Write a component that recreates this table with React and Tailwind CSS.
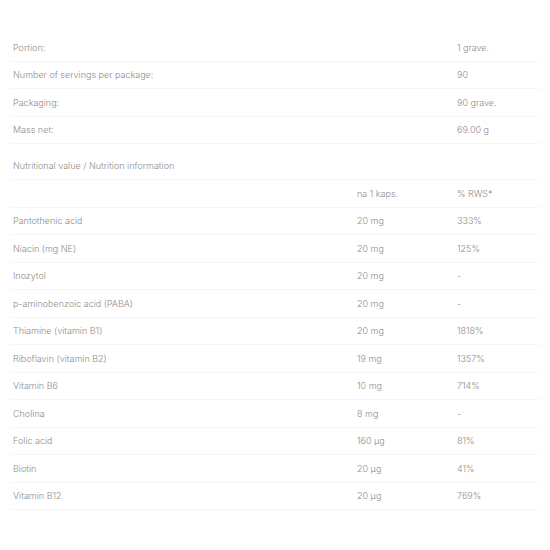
import React from "react";

const top = [
  ["Portion:", "1 grave."],
  ["Number of servings per package:", "90"],
  ["Packaging:", "90 grave."],
  ["Mass net:", "69.00 g"],
];

const nut = [
  ["", "na 1 kaps.", "% RWS*"],
  ["Pantothenic acid", "20 mg", "333%"],
  ["Niacin (mg NE)", "20 mg", "125%"],
  ["Inozytol", "20 mg", "-"],
  ["p-aminobenzoic acid (PABA)", "20 mg", "-"],
  ["Thiamine (vitamin B1)", "20 mg", "1818%"],
  ["Riboflavin (vitamin B2)", "19 mg", "1357%"],
  ["Vitamin B6", "10 mg", "714%"],
  ["Cholina", "8 mg", "-"],
  ["Folic acid", "160 µg", "81%"],
  ["Biotin", "20 µg", "41%"],
  ["Vitamin B12", "20 µg", "769%"],
];

export default function App() {
  return (
    <div
      className="w-[550px] h-[550px] bg-white text-[#8c8c8c] text-[9px] font-light pt-[34px] px-[10px]"
      style={{ fontFamily: "Inter, 'Open Sans', sans-serif" }}
    >
      <div className="flex flex-col">
        {top.map(([a, b], i) => (
          <div key={i} className="h-[27.5px] flex items-center border-b border-[#f6f6f6] pl-[3px]">
            <div className="w-[444px]">{a}</div>
            <div>{b}</div>
          </div>
        ))}
      </div>
      <div className="mt-[8px] h-[28px] flex items-center border-b border-[#f6f6f6] pl-[3px]">
        Nutritional value / Nutrition information
      </div>
      <div className="flex flex-col">
        {nut.map(([a, b, c], i) => (
          <div key={i} className="h-[27.5px] flex items-center border-b border-[#f6f6f6] pl-[3px]">
            <div className="w-[344px]">{a}</div>
            <div className="w-[100px]">{b}</div>
            <div>{c}</div>
          </div>
        ))}
      </div>
    </div>
  );
}
